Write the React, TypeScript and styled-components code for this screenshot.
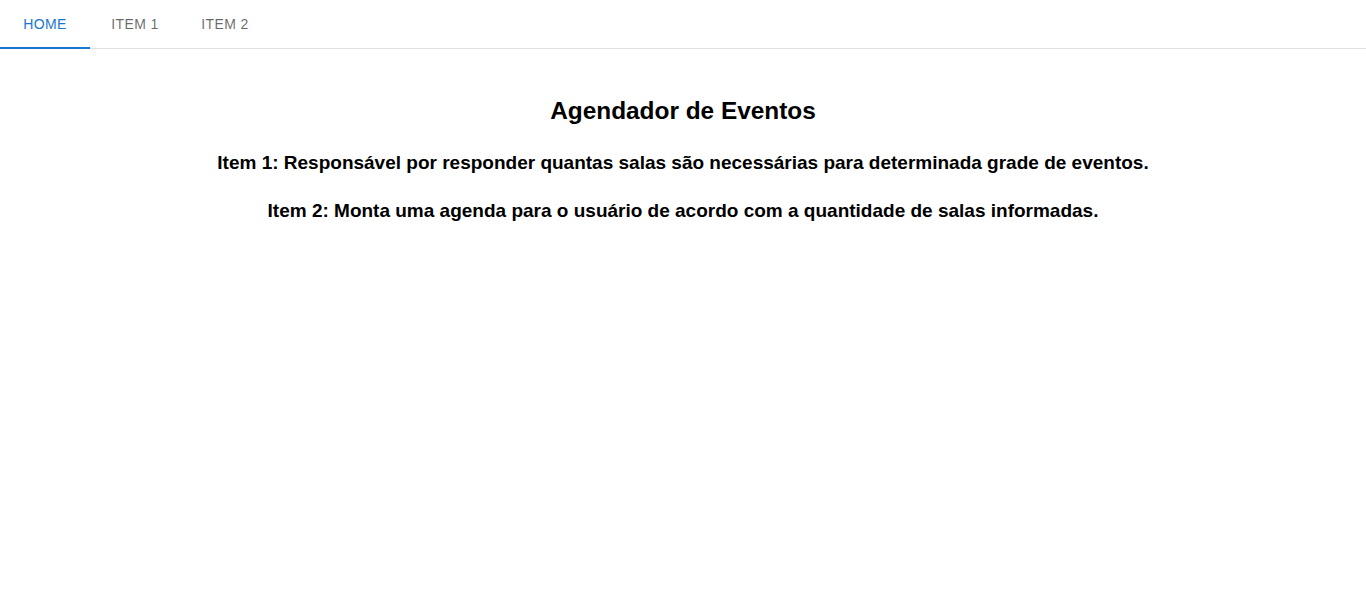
import React, { useState } from "react";
import styled, { createGlobalStyle } from "styled-components";

const Global = createGlobalStyle`
  html, body { margin: 0; padding: 0; background: #fff; }
  body { font-family: "Liberation Sans", Arial, sans-serif; color: #000; }
`;

const TabBar = styled.nav`
  display: flex;
  height: 48px;
  border-bottom: 1px solid #e0e0e0;
`;

const Tab = styled.button<{ $active?: boolean }>`
  position: relative;
  min-width: 90px;
  height: 48px;
  padding: 12px 16px;
  border: none;
  background: transparent;
  font-family: "Liberation Sans", Arial, sans-serif;
  font-size: 14px;
  font-weight: 500;
  letter-spacing: 0.02857em;
  text-transform: uppercase;
  color: ${(p) => (p.$active ? "#1976d2" : "rgba(0,0,0,0.6)")};
  cursor: pointer;
  &::after {
    content: "";
    position: absolute;
    left: 0;
    right: 0;
    bottom: -1px;
    height: 2px;
    background: ${(p) => (p.$active ? "#1976d2" : "transparent")};
  }
`;

const Main = styled.main`
  display: flex;
  flex-direction: column;
  align-items: center;
  padding-top: 48px;
`;

const Title = styled.h2`
  margin: 0 0 27px;
  font-size: 24.4px;
  line-height: 28px;
  font-weight: 700;
  text-align: center;
`;

const Line = styled.h3`
  margin: 0 0 26px;
  font-size: 19px;
  line-height: 22px;
  font-weight: 700;
  text-align: center;
`;

export default function App() {
  const [tab, setTab] = useState(0);
  const tabs = ["Home", "Item 1", "Item 2"];
  return (
    <>
      <Global />
      <TabBar>
        {tabs.map((t, i) => (
          <Tab key={t} $active={tab === i} onClick={() => setTab(i)}>
            {t}
          </Tab>
        ))}
      </TabBar>
      <Main>
        <Title>Agendador de Eventos</Title>
        <Line>Item 1: Responsável por responder quantas salas são necessárias para determinada grade de eventos.</Line>
        <Line>Item 2: Monta uma agenda para o usuário de acordo com a quantidade de salas informadas.</Line>
      </Main>
    </>
  );
}
